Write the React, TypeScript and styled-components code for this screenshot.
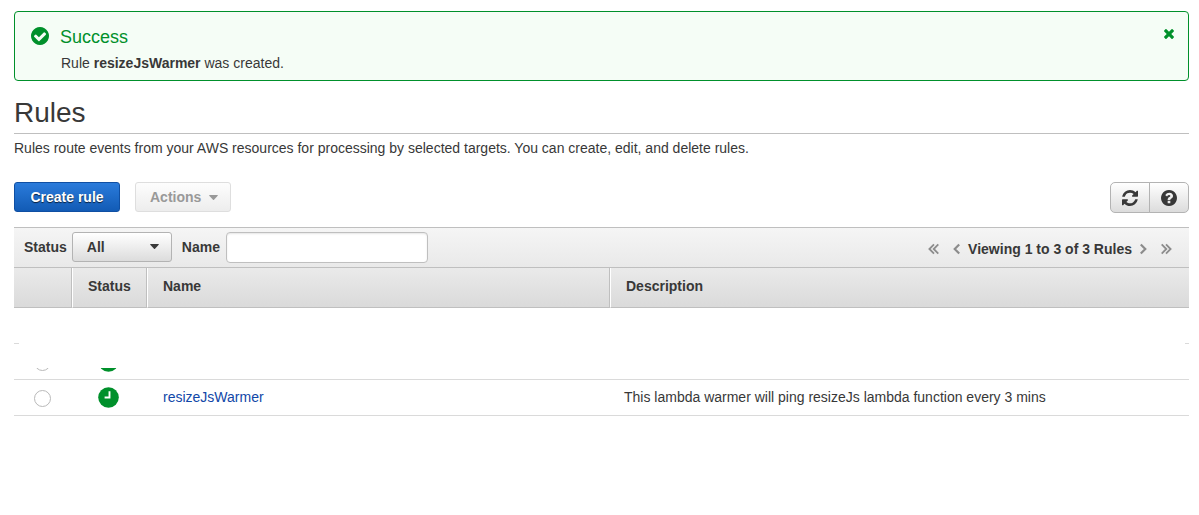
import React from "react";
import styled, { createGlobalStyle, css } from "styled-components";

const GlobalStyle = createGlobalStyle`
  *, *::before, *::after { box-sizing: border-box; }
  body {
    margin: 0;
    background: #fff;
    color: #383838;
    font: 14px/20px "Liberation Sans", Arial, sans-serif;
  }
  button, input, select { font: inherit; color: inherit; margin: 0; }
`;

const green = "#00902b";
const line = "#bfbfbf";

const Page = styled.main`
  padding: 11px 10px 24px 14px;
`;

const Alert = styled.section`
  display: flex;
  align-items: flex-start;
  height: 70px;
  padding: 15px 14px 0 16px;
  border: 1px solid ${green};
  border-radius: 4px;
  background: #f5fdf6;
`;

const AlertBody = styled.div`
  flex: 1;
  margin-left: 11px;
`;

const AlertTitle = styled.h2`
  margin: 0;
  color: ${green};
  font-size: 18px;
  font-weight: 400;
  line-height: 20px;
`;

const AlertText = styled.p`
  margin: 6px 0 0 1px;
`;

const CloseButton = styled.button`
  display: flex;
  padding: 2px 0;
  border: 0;
  background: none;
  color: ${green};
  cursor: pointer;
`;

const Icon = styled.svg`
  display: block;
  flex: none;
  fill: currentColor;
`;

const AlertIcon = styled(Icon)`
  color: ${green};
`;

const Heading = styled.h1`
  margin: 16px 0 0;
  padding-bottom: 4px;
  border-bottom: 1px solid ${line};
  font-size: 28px;
  font-weight: 400;
  line-height: 32px;
`;

const Intro = styled.p`
  margin: 4px 0 0;
`;

const Toolbar = styled.div`
  display: flex;
  align-items: flex-start;
  gap: 15px;
  margin: 24px 0 14px;
`;

const Button = styled.button<{ $primary?: boolean }>`
  display: flex;
  align-items: center;
  gap: 8px;
  height: 30px;
  padding: 0 14px;
  border: 1px solid #b3b3b3;
  border-radius: 3px;
  background: linear-gradient(#fff, #dcdcdc);
  font-weight: 700;
  cursor: pointer;

  &:disabled {
    padding: 0 12px 0 14px;
    border-color: #dedede;
    background: linear-gradient(#fdfdfd, #ededed);
    color: #999;
    cursor: default;
  }

  ${(p) =>
    p.$primary &&
    css`
      min-width: 106px;
      justify-content: center;
      border-color: #0f4fa3;
      background: linear-gradient(#2a7bdb, #125bb5);
      color: #fff;
      text-shadow: 0 1px 1px rgba(0, 0, 0, 0.7);
    `}
`;

const IconGroup = styled.div`
  display: flex;
  margin-left: auto;
`;

const IconButton = styled.button`
  display: flex;
  align-items: center;
  justify-content: center;
  width: 40px;
  height: 31px;
  padding: 0;
  border: 1px solid #b3b3b3;
  border-radius: 5px 0 0 5px;
  background: linear-gradient(#fff, #dcdcdc);
  cursor: pointer;

  & + & {
    margin-left: -1px;
    border-radius: 0 5px 5px 0;
  }
`;

const FilterBar = styled.div`
  display: flex;
  align-items: flex-start;
  height: 41px;
  padding: 4px 17px 0 10px;
  border-top: 1px solid ${line};
  border-bottom: 1px solid ${line};
  background: linear-gradient(#f5f5f5, #e9e9e9);
`;

const FilterLabel = styled.label`
  font-weight: 700;
  line-height: 30px;
`;

const SelectWrap = styled.div`
  position: relative;
  margin: 0 10px 0 5px;
`;

const Select = styled.select`
  display: block;
  width: 100px;
  height: 30px;
  padding: 0 14px;
  appearance: none;
  border: 1px solid #b3b3b3;
  border-radius: 3px;
  background: linear-gradient(#fff, #dcdcdc);
  font-weight: 700;
`;

const SelectCaret = styled.span`
  position: absolute;
  top: 12px;
  right: 13px;
  pointer-events: none;
`;

const TextInput = styled.input`
  width: 202px;
  height: 31px;
  margin-left: 6px;
  padding: 0 8px;
  border: 1px solid ${line};
  border-radius: 4px;
  background: #fff;
  box-shadow: inset 0 1px 2px rgba(0, 0, 0, 0.1);
`;

const Pager = styled.nav`
  display: flex;
  align-items: center;
  height: 34px;
  margin-left: auto;
  font-weight: 700;
`;

const PagerButton = styled.button<{ $gap: "before" | "after" | "none" }>`
  display: flex;
  margin: ${(p) => ({ before: "0 0 0 14px", after: "0 14px 0 0", none: "0" })[p.$gap]};
  padding: 0;
  border: 0;
  background: none;
  color: #8c8c8c;
`;

const PagerText = styled.span`
  margin: 0 8px;
`;

const TableArea = styled.div`
  position: relative;
`;

const Table = styled.table`
  width: 100%;
  table-layout: fixed;
  border-collapse: separate;
  border-spacing: 0;
`;

const Th = styled.th`
  height: 40px;
  padding: 0 15px 3px;
  border-bottom: 1px solid ${line};
  border-left: 1px solid #fff;
  border-right: 1px solid ${line};
  background: linear-gradient(#eaeaea, #dadada);
  text-align: left;

  &:first-child { border-left: 0; }
  &:last-child { border-right: 0; }
`;

const Td = styled.td<{ $kind?: "control" | "name" }>`
  height: 36px;
  padding: ${(p) => (p.$kind === "control" ? "0 2px 0 0" : p.$kind === "name" ? "0 16px 2px" : "0 14px 2px")};
  border-bottom: 1px solid #dadada;
  text-align: left;
  vertical-align: middle;
`;

const Radio = styled.input`
  display: block;
  width: 17px;
  height: 17px;
  margin: 2px auto 0;
  appearance: none;
  border: 1px solid #b9b9b9;
  border-radius: 50%;
  background: #fff;
`;

const ClockIcon = styled(Icon)`
  margin: 0 auto;
`;

const RuleLink = styled.a`
  color: #1147a8;
  text-decoration: none;
`;

/* Blank panel that hides the two rules above the new one. */
const Cover = styled.div`
  position: absolute;
  top: 42px;
  left: 5px;
  right: 4px;
  height: 58px;
  background: #fff;
`;

const DISC =
  "M1536 896q0 209-103 385.5t-279.5 279.5-385.5 103-385.5-103-279.5-279.5-103-385.5 103-385.5 279.5-279.5 385.5-103 385.5 103 279.5 279.5 103 385.5z";

const Caret = () => (
  <Icon width="9" height="5" viewBox="0 0 9 5" aria-hidden="true">
    <path d="M.6 0h7.8q.7.2.3.8L5 4.7q-.5.4-1 0L.3.8Q-.1.2.6 0z" />
  </Icon>
);

const Chevron = ({ double, right }: { double?: boolean; right?: boolean }) => (
  <svg
    width={double ? 11 : 7}
    height="12"
    viewBox={double ? "0 0 11 12" : "0 0 7 12"}
    fill="none"
    stroke="currentColor"
    strokeWidth={double ? 1.8 : 2.2}
    transform={right ? "rotate(180)" : undefined}
    aria-hidden="true"
  >
    {double ? (
      <path d="M6 1.4 1.4 6 6 10.6M10.300 1.4 5.700 6l4.600 4.600" />
    ) : (
      <path d="M6.200 1.4 1.700 6l4.500 4.600" />
    )}
  </svg>
);

const Clock = () => (
  <ClockIcon width="21" height="21" viewBox="0 0 21 21" role="img" aria-label="Scheduled">
    <circle cx="10.5" cy="10.5" r="10.3" fill={green} />
    <path d="M11.5 4.200v6.300H6.600" fill="none" stroke="#fff" strokeWidth="1.9" />
  </ClockIcon>
);

const rules = [
  { id: "rule-1", scheduled: false, name: "", description: "" },
  { id: "rule-2", scheduled: true, name: "", description: "" },
  {
    id: "rule-3",
    scheduled: true,
    name: "resizeJsWarmer",
    description: "This lambda warmer will ping resizeJs lambda function every 3 mins",
  },
];

export default function App() {
  return (
    <>
      <GlobalStyle />
      <Page>
        <Alert role="status">
          <AlertIcon width="18" height="18" viewBox="0 128 1536 1536" aria-hidden="true">
            <path
              fillRule="evenodd"
              d={
                "M1284 734q0-28-18-46l-91-90q-19-19-45-19t-45 19l-408 407-226-226q-19-19-45-19t-45 19l-91 90q-18 18-18 46 0 27 18 45l362 362q19 19 45 19 27 0 46-19l543-543q18-18 18-45z" +
                DISC
              }
            />
          </AlertIcon>
          <AlertBody>
            <AlertTitle>Success</AlertTitle>
            <AlertText>
              Rule <strong>resizeJsWarmer</strong> was created.
            </AlertText>
          </AlertBody>
          <CloseButton type="button" aria-label="Close">
            <Icon width="10" height="10" viewBox="110 366 1188 1188">
              <path d="M1298 1322q0 40-28 68l-136 136q-28 28-68 28t-68-28l-294-294-294 294q-28 28-68 28t-68-28l-136-136q-28-28-28-68t28-68l294-294-294-294q-28-28-28-68t28-68l136-136q28-28 68-28t68 28l294 294 294-294q28-28 68-28t68 28l136 136q28 28 28 68t-28 68l-294 294 294 294q28 28 28 68z" />
            </Icon>
          </CloseButton>
        </Alert>

        <Heading>Rules</Heading>
        <Intro>
          Rules route events from your AWS resources for processing by selected targets. You can
          create, edit, and delete rules.
        </Intro>

        <Toolbar>
          <Button type="button" $primary>
            Create rule
          </Button>
          <Button type="button" disabled>
            Actions
            <Caret />
          </Button>
          <IconGroup>
            <IconButton type="button" aria-label="Refresh">
              <Icon width="16" height="16" viewBox="0 128 1536 1536">
                <path d="M1511 1056q0 5-1 7-64 268-268 434.5t-478 166.5q-146 0-282.5-55t-243.5-157l-129 129q-19 19-45 19t-45-19-19-45v-448q0-26 19-45t45-19h448q26 0 45 19t19 45-19 45l-137 137q71 66 161 102t187 36q134 0 250-65t186-179q11-17 53-117 8-23 30-23h192q13 0 22.5 9.5t9.5 22.5zm25-800v448q0 26-19 45t-45 19h-448q-26 0-45-19t-19-45 19-45l138-138q-148-137-349-137-134 0-250 65t-186 179q-11 17-53 117-8 23-30 23h-199q-13 0-22.5-9.5t-9.5-22.5v-7q65-268 270-434.5t480-166.5q146 0 284 55.5t245 156.5l130-129q19-19 45-19t45 19 19 45z" />
              </Icon>
            </IconButton>
            <IconButton type="button" aria-label="Help">
              <Icon width="16" height="16" viewBox="0 128 1536 1536">
                <path
                  fillRule="evenodd"
                  d={
                    "M896 1376v-192q0-14-9-23t-23-9h-192q-14 0-23 9t-9 23v192q0 14 9 23t23 9h192q14 0 23-9t9-23zm256-672q0-88-55.5-163t-138.5-116-170-41q-243 0-371 213-15 24 8 42l132 100q7 6 19 6 16 0 25-12 53-68 86-92 34-24 86-24 48 0 85.5 26t37.5 59q0 38-20 61t-68 45q-63 28-115.5 86.5t-52.5 125.5v36q0 14 9 23t23 9h192q14 0 23-9t9-23q0-19 21.5-49.5t54.5-49.5q32-18 49-28.5t46-35 44.5-48 28-60.5 12.5-81z" +
                    DISC
                  }
                />
              </Icon>
            </IconButton>
          </IconGroup>
        </Toolbar>

        <FilterBar>
          <FilterLabel htmlFor="status">Status</FilterLabel>
          <SelectWrap>
            <Select id="status" defaultValue="All">
              <option>All</option>
              <option>Enabled</option>
              <option>Disabled</option>
            </Select>
            <SelectCaret>
              <Caret />
            </SelectCaret>
          </SelectWrap>
          <FilterLabel htmlFor="name">Name</FilterLabel>
          <TextInput id="name" type="text" />
          <Pager aria-label="Pages">
            <PagerButton type="button" $gap="after" aria-label="First page">
              <Chevron double />
            </PagerButton>
            <PagerButton type="button" $gap="none" aria-label="Previous page">
              <Chevron />
            </PagerButton>
            <PagerText>Viewing 1 to 3 of 3 Rules</PagerText>
            <PagerButton type="button" $gap="none" aria-label="Next page">
              <Chevron right />
            </PagerButton>
            <PagerButton type="button" $gap="before" aria-label="Last page">
              <Chevron double right />
            </PagerButton>
          </Pager>
        </FilterBar>

        <TableArea>
          <Table>
            <colgroup>
              <col style={{ width: 58 }} />
              <col style={{ width: 75 }} />
              <col style={{ width: 463 }} />
              <col />
            </colgroup>
            <thead>
              <tr>
                <Th aria-label="Select" />
                <Th>Status</Th>
                <Th>Name</Th>
                <Th>Description</Th>
              </tr>
            </thead>
            <tbody>
              {rules.map((rule) => (
                <tr key={rule.id}>
                  <Td $kind="control">
                    {rule.scheduled && <Radio type="radio" name="rule" aria-label={rule.name || rule.id} />}
                  </Td>
                  <Td $kind="control">{rule.scheduled && <Clock />}</Td>
                  <Td $kind="name">{rule.name && <RuleLink href="#rule">{rule.name}</RuleLink>}</Td>
                  <Td>{rule.description}</Td>
                </tr>
              ))}
            </tbody>
          </Table>
          <Cover />
        </TableArea>
      </Page>
    </>
  );
}
